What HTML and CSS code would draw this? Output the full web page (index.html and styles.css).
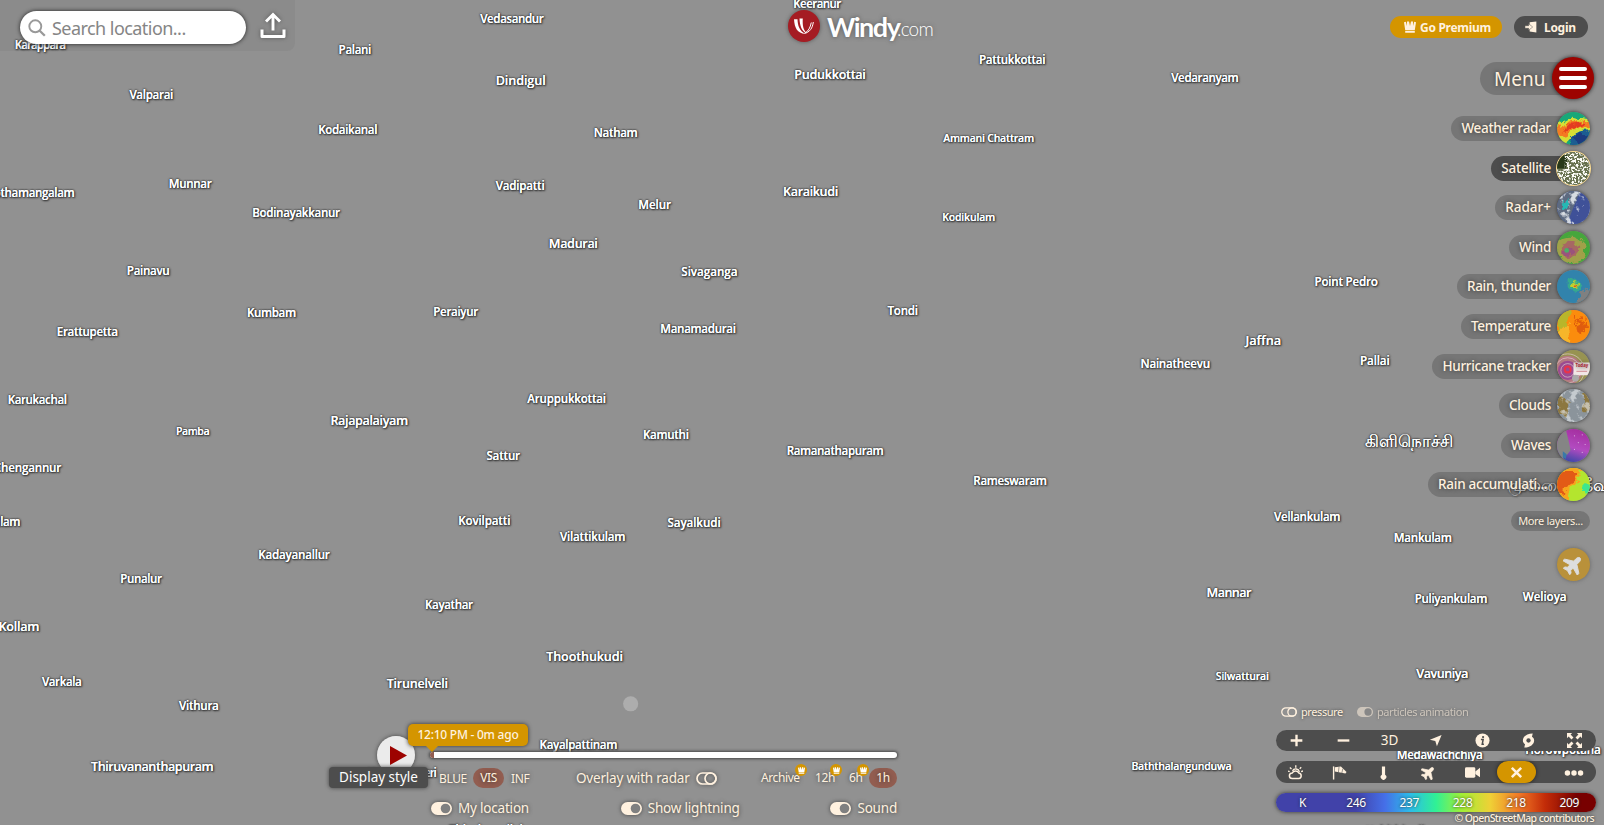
FILE: index.html
```html
<!DOCTYPE html>
<html lang="en">
<head>
<meta charset="utf-8">
<title>Windy.com</title>
<link rel="stylesheet" href="styles.css">
</head>
<body>
<svg class="defs" width="0" height="0">
  <defs>
    <symbol id="toggle-off" viewBox="0 0 21 13"><rect x="1" y="1" width="19" height="11" rx="5.5" fill="none" stroke="currentColor" stroke-width="1.7"/><circle cx="14.5" cy="6.5" r="5.5" fill="none" stroke="currentColor" stroke-width="1.7"/></symbol>
    <symbol id="toggle-on" viewBox="0 0 21 13"><rect x="0" y="0" width="21" height="13" rx="6.5" fill="currentColor"/><circle cx="14.5" cy="6.5" r="4.8" fill="#808080"/></symbol>
    <symbol id="crown" viewBox="0 0 12 12"><path d="M0 1.300 1.800.7 3 5 3 .6H5L6 5 7 .6H9L9 5 10.200.7 12 1.300 10.800 9H1.200zM1.200 9.700h9.600v2H1.200z" fill="currentColor"/></symbol>
    <symbol id="plane" viewBox="0 0 512 512"><path transform="rotate(-45 256 256)" fill="currentColor" stroke="currentColor" stroke-width="22" stroke-linejoin="round" d="M482 256c0-32-40-56-74-56h-92L202 20c-4-7-12-12-20-12h-44l52 192H104l-42-54H14l32 110-32 110h48l42-54h86l-52 192h44c8 0 16-5 20-12l114-180h92c34 0 74-24 74-56z"/></symbol>
    <filter id="rough" x="-20%" y="-20%" width="140%" height="140%"><feTurbulence type="fractalNoise" baseFrequency=".16" numOctaves="3" seed="4"/><feDisplacementMap in="SourceGraphic" scale="9" xChannelSelector="R" yChannelSelector="G"/><feGaussianBlur stdDeviation=".5"/></filter>
    <filter id="speckle"><feTurbulence type="fractalNoise" baseFrequency=".45" numOctaves="3" seed="8"/><feColorMatrix values="0 0 0 0 1  0 0 0 0 1  0 0 0 0 .96  7 0 0 0 -3.2"/><feComposite in2="SourceGraphic" operator="in"/></filter>
    <filter id="cloudy"><feTurbulence type="fractalNoise" baseFrequency=".14" numOctaves="4" seed="12"/><feColorMatrix values="0 0 0 0 .78  0 0 0 0 .81  0 0 0 0 .84  5 0 0 0 -2.5"/><feComposite in2="SourceGraphic" operator="in"/></filter>
    <linearGradient id="waves-fill" x1=".6" y1="0" x2=".3" y2="1"><stop offset="0" stop-color="#a52fa0"/><stop offset=".55" stop-color="#b24bc0"/><stop offset="1" stop-color="#3546a6"/></linearGradient>
  </defs>
</svg>

<main class="app">
  <svg class="map" viewBox="0 0 1568 806.5" width="1604" height="825">
    <circle cx="616.5" cy="688" r="7.4" fill="#adadad"/>
    <g class="labels">
      <text x="799" y="7.500" textLength="47">Keeranur</text>
      <text x="500.500" y="22.500" textLength="62">Vedasandur</text>
      <text x="39.500" y="48" textLength="50">Karappara</text>
      <text x="347" y="52.500" textLength="32">Palani</text>
      <text x="148" y="96.500" textLength="43">Valparai</text>
      <text class="big" x="509" y="83" textLength="49">Dindigul</text>
      <text class="big" x="811.500" y="77" textLength="70">Pudukkottai</text>
      <text x="989.500" y="62.500" textLength="65">Pattukkottai</text>
      <text x="1178" y="80" textLength="66">Vedaranyam</text>
      <text x="340" y="131" textLength="58">Kodaikanal</text>
      <text x="602" y="133.500" textLength="43">Natham</text>
      <text class="small" x="966.500" y="138.500" textLength="89">Ammani Chattram</text>
      <text x="186" y="183.500" textLength="42">Munnar</text>
      <text x="508.500" y="185.500" textLength="48">Vadipatti</text>
      <text x="640" y="204" textLength="32">Melur</text>
      <text class="big" x="792.500" y="191.500" textLength="54">Karaikudi</text>
      <text x="30" y="192.500" textLength="86">Kothamangalam</text>
      <text x="289.500" y="212" textLength="86">Bodinayakkanur</text>
      <text class="small" x="947" y="216" textLength="52">Kodikulam</text>
      <text class="big" x="560.500" y="242" textLength="48">Madurai</text>
      <text x="145" y="268.500" textLength="42">Painavu</text>
      <text x="693.500" y="269.500" textLength="55">Sivaganga</text>
      <text x="265.500" y="309.500" textLength="48">Kumbam</text>
      <text x="445.500" y="308.500" textLength="44">Peraiyur</text>
      <text x="85.500" y="328" textLength="60">Erattupetta</text>
      <text x="682.500" y="325.500" textLength="74">Manamadurai</text>
      <text x="882.500" y="307.500" textLength="30">Tondi</text>
      <text x="1316" y="279.500" textLength="62">Point Pedro</text>
      <text class="big" x="1235" y="337" textLength="35">Jaffna</text>
      <text x="1149" y="359.500" textLength="68">Nainatheevu</text>
      <text x="1344" y="356.500" textLength="29">Pallai</text>
      <text x="36.500" y="394.500" textLength="58">Karukachal</text>
      <text x="554" y="393.500" textLength="77">Aruppukkottai</text>
      <text class="big" x="361" y="415" textLength="76">Rajapalaiyam</text>
      <text class="small" x="188.500" y="425" textLength="33">Pamba</text>
      <text x="651" y="429" textLength="45">Kamuthi</text>
      <text x="492" y="449.500" textLength="33">Sattur</text>
      <text x="816.500" y="444.500" textLength="95">Ramanathapuram</text>
      <text x="27" y="461" textLength="66">Chengannur</text>
      <text x="987.500" y="474" textLength="72">Rameswaram</text>
      <text class="tamil" x="1377" y="437">கிளிநொச்சி</text>
      <text class="tamil" x="1524" y="480">முல்லைத்தீவு</text>
      <text x="1278" y="509" textLength="65">Vellankulam</text>
      <text x="1391" y="529.500" textLength="57">Mankulam</text>
      <text x="473.500" y="513" textLength="51">Kovilpatti</text>
      <text x="678.500" y="515" textLength="52">Sayalkudi</text>
      <text x="579.500" y="528.500" textLength="64">Vilattikulam</text>
      <text x="2" y="514" textLength="36">Kollam</text>
      <text x="287.500" y="546" textLength="70">Kadayanallur</text>
      <text x="138" y="569.500" textLength="41">Punalur</text>
      <text x="439" y="595" textLength="47">Kayathar</text>
      <text class="big" x="1201.500" y="584" textLength="44">Mannar</text>
      <text x="1418.500" y="589" textLength="71">Puliyankulam</text>
      <text x="1510" y="588" textLength="43">Welioya</text>
      <text class="big" x="18.500" y="617" textLength="40">Kollam</text>
      <text class="big" x="571.500" y="646.500" textLength="75">Thoothukudi</text>
      <text x="60.500" y="671" textLength="39">Varkala</text>
      <text class="big" x="408" y="672.500" textLength="60">Tirunelveli</text>
      <text x="194.500" y="694.500" textLength="39">Vithura</text>
      <text class="small" x="1214.500" y="665" textLength="52">Silwatturai</text>
      <text class="big" x="1410" y="663" textLength="51">Vavuniya</text>
      <text class="big" x="149" y="753.500" textLength="120">Thiruvananthapuram</text>
      <text x="565.500" y="732.500" textLength="76">Kayalpattinam</text>
      <text x="393" y="759.500" textLength="68">Kanniyakumeri</text>
      <text class="small" x="1155" y="753" textLength="98">Baththalangunduwa</text>
      <text x="1407.500" y="741.500" textLength="84">Medawachchiya</text>
      <text x="1528" y="737.500" textLength="74">Horowpotana</text>
      <text x="475" y="815.500" textLength="72">Thisaiyanvilai</text>
      <text x="1375" y="816" textLength="80">Kebithigollewa</text>
    </g>
  </svg>

  <header class="search-bar">
    <div class="search">
      <svg class="search-icon" viewBox="0 0 18 18"><circle cx="7.300" cy="7.300" r="6" fill="none" stroke="#999" stroke-width="1.900"/><path d="m11.500 11.500 5.300 5.300" stroke="#999" stroke-width="2.300"/></svg>
      <span>Search location...</span>
    </div>
    <svg class="upload" viewBox="0 0 26 27"><path d="M13 18.500V3M6 9.500 13 2.500l7 7" fill="none" stroke="#fff" stroke-width="2.900"/><path d="M2 17.500V24.500H24V17.500" fill="none" stroke="#fff" stroke-width="3" stroke-linejoin="round"/></svg>
  </header>

  <div class="logo">
    <svg class="logo-mark" viewBox="0 0 32 32"><circle cx="16" cy="16" r="16" fill="#a51c23"/><path d="M6 9.300h3.500c.2 6.500 2 11.500 7.500 14.500C9.500 23.600 6.500 18 6 9.300zM11.500 8.500h3.300c-.4 6.500.3 11.500 4.200 15-5.300-2-7.300-8-7.500-15z" fill="#fff"/><path d="M25.300 12c-.7 6-3.500 10.300-9 11.400M23.300 12.500c-1 5-2.800 8.500-6.300 10.500" fill="none" stroke="#fff" stroke-width="1"/></svg>
    <span class="logo-name">Windy</span><span class="logo-tld">.com</span>
  </div>

  <nav class="account">
    <a class="premium"><svg viewBox="0 0 12 12"><use href="#crown"/></svg><span>Go Premium</span></a>
    <a class="login"><svg viewBox="0 0 13 12"><path d="M5 .8 12.300 0v12L5 10.800V8.500L6.800 6 5 3.500z" fill="currentColor"/><path d="M0 4.600h4V2.400L8.300 6 4 9.600V7.400H0z" fill="currentColor" stroke="#4d4d4d" stroke-width=".5"/></svg><span>Login</span></a>
  </nav>

  <aside class="layers">
    <div class="menu"><span>Menu</span><i><b></b><b></b><b></b></i></div>
    <ul>
      <li><span>Weather radar</span><svg class="thumb" viewBox="0 0 34 34"><rect width="34" height="34" fill="#18a878"/><g filter="url(#rough)"><path d="M16 21 38 16V38H14z" fill="#1a5b91"/><path d="M18 26 26 20l6 6-8 8z" fill="#1c3a80"/><path d="M-2 15 14 6 38 9v8L22 19 14 28 2 36-2 30z" fill="#d7df36"/><path d="M-2 18 15 9 36 11v4l-17 2L9 25-2 27z" fill="#f47a20"/><path d="m10 12 16-1v3l-12 3-8 5z" fill="#e33a20"/></g></svg></li>
      <li class="active"><span>Satellite</span><svg class="thumb" viewBox="0 0 34 34"><rect width="34" height="34" fill="#66704d"/><path d="M0 3h11l-2 14H0z" fill="#283818"/><rect x="8" width="26" height="34" fill="#fff" filter="url(#speckle)"/><rect y="18" width="10" height="16" fill="#fff" filter="url(#speckle)"/></svg></li>
      <li><span class="w-radar-plus">Radar+</span><svg class="thumb" viewBox="0 0 34 34"><rect width="34" height="34" fill="#3f5198"/><path d="M0 34V0h24L10 34z" fill="#5d6a80"/><rect width="34" height="34" fill="#fff" filter="url(#cloudy)" opacity=".9"/><path d="M30 8h10v30H14z" fill="#3f5198" filter="url(#rough)"/><path d="m4 14 8-7-1 8-6 5z" fill="#26b8b4" filter="url(#rough)"/></svg></li>
      <li><span>Wind</span><svg class="thumb" viewBox="0 0 34 34"><rect width="34" height="34" fill="#46a63c"/><g filter="url(#rough)"><ellipse cx="14" cy="20" rx="16" ry="14" fill="#a1a04a"/><circle cx="13" cy="19" r="9" fill="#a76763"/><circle cx="12" cy="21" r="5" fill="#9a527c"/></g><circle cx="10" cy="20" r="2.500" fill="#4cae67"/></svg></li>
      <li><span>Rain, thunder</span><svg class="thumb" viewBox="0 0 34 34"><rect width="34" height="34" fill="#3183ac"/><g filter="url(#rough)"><path d="M40 15 25 22 18 38H40z" fill="#808080"/><path d="m11 8 12 3 3 9-7 4-8-5z" fill="#35a98e"/><circle cx="18" cy="15" r="3.500" fill="#c5d22b"/><circle cx="19" cy="16" r="1.700" fill="#dd5927"/></g></svg></li>
      <li><span>Temperature</span><svg class="thumb" viewBox="0 0 34 34"><rect width="34" height="34" fill="#fb8c0d"/><g filter="url(#rough)"><path d="M0 0h14L9 16 0 24z" fill="#b8b62a"/><path d="M0 24 12 12l2 26H0z" fill="#f6b62a"/><path d="m17 5 2 0 2 12 3-10 3 9 2-9 2 12-6 6-5-2z" fill="#df5b0c"/></g></svg></li>
      <li><span>Hurricane tracker</span><svg class="thumb" viewBox="0 0 34 34"><rect width="34" height="34" fill="#979351"/><circle cx="11" cy="21" r="15" fill="#b57a82"/><circle cx="11" cy="21" r="10" fill="#9b4b91"/><g fill="none" stroke="#e3ccd0" stroke-width=".7"><circle cx="11" cy="21" r="7"/><circle cx="11" cy="21" r="13"/><circle cx="11" cy="21" r="17"/></g><circle cx="11" cy="20" r="3" fill="none" stroke="#e8344b" stroke-width="2.200"/><path d="M17 13h17v13H17z" fill="#f1e7e5"/><text x="19" y="18" font-size="4.500" font-weight="700" fill="#aa2430">Today</text><path d="M20 22h11" stroke="#d28a92"/><circle cx="19" cy="29" r="3.500" fill="#aaa"/></svg></li>
      <li><span>Clouds</span><svg class="thumb" viewBox="0 0 34 34"><rect width="34" height="34" fill="#8b949b"/><path d="M0 4 12 12 10 28H0zM26 5h12v18h-10z" fill="#8c7740" filter="url(#rough)"/><rect width="34" height="34" fill="#fff" filter="url(#cloudy)" opacity=".65"/></svg></li>
      <li><span>Waves</span><svg class="thumb" viewBox="0 0 34 34"><rect width="34" height="34" fill="url(#waves-fill)"/><path d="M0 0h9l3 12 2 10-4 5-4-2 1 9H0z" fill="#858585"/><path d="m6 23 4 3-1 5-3-2z" fill="#3979a8"/><g fill="#dab4e0"><circle cx="18" cy="7" r=".6"/><circle cx="26" cy="6" r=".6"/><circle cx="22" cy="14" r=".6"/><circle cx="29" cy="16" r=".6"/><circle cx="18" cy="21" r=".6"/><circle cx="26" cy="24" r=".6"/></g></svg></li>
      <li><span class="w-accumulation">Rain accumulati...</span><svg class="thumb" viewBox="0 0 34 34"><rect width="34" height="34" fill="#b4e52e"/><g filter="url(#rough)"><path d="M28 16h12v12l-10 3z" fill="#3ce68f"/><path d="M-2-2H26l-4 16-9 8-1 16H-2z" fill="#f7a51f"/><path d="M-2 4 22 4 18 14 8 20 7 30-2 28z" fill="#e25a19"/></g></svg></li>
    </ul>
    <span class="more">More layers...</span>
    <span class="plane"><svg viewBox="0 0 512 512"><use href="#plane"/></svg></span>
  </aside>

  <section class="player">
    <div class="track"><i></i></div>
    <div class="row">
      <span class="opt o-blue">BLUE</span><span class="opt chosen o-vis">VIS</span><span class="opt o-inf">INF</span>
      <span class="radar-overlay">Overlay with radar <svg class="toggle"><use href="#toggle-off"/></svg></span>
      <span class="range">
        <span class="archive">Archive<i class="badge"><svg viewBox="0 0 12 12"><use href="#crown"/></svg></i></span>
        <span class="h12">12h<i class="badge"><svg viewBox="0 0 12 12"><use href="#crown"/></svg></i></span>
        <span class="h6">6h<i class="badge"><svg viewBox="0 0 12 12"><use href="#crown"/></svg></i></span>
        <span class="chosen h1">1h</span>
      </span>
    </div>
    <div class="row switches">
      <span class="s-location"><svg class="toggle"><use href="#toggle-on"/></svg>My location</span>
      <span class="s-lightning"><svg class="toggle"><use href="#toggle-on"/></svg>Show lightning</span>
      <span class="s-sound"><svg class="toggle"><use href="#toggle-on"/></svg>Sound</span>
    </div>
  </section>
  <div class="play"><svg viewBox="0 0 38 38"><circle cx="19" cy="19" r="19" fill="#ebebeb"/><path d="M13 10v19l17-9.500z" fill="#9d0300"/></svg></div>
  <div class="timecode">12:10 PM - 0m ago</div>
  <div class="tip">Display style</div>

  <section class="controls">
    <div class="flags">
      <span class="f-pressure"><svg><use href="#toggle-off"/></svg>pressure</span>
      <span class="f-particles"><svg><use href="#toggle-on"/></svg>particles animation</span>
    </div>
    <div class="bar top">
      <span><svg viewBox="0 0 16 16"><path d="M8 2.500v11M2.500 8h11" stroke="currentColor" stroke-width="2.200"/></svg></span>
      <span><svg viewBox="0 0 16 16"><path d="M2.500 8h11" stroke="currentColor" stroke-width="2.200"/></svg></span>
      <span class="three-d">3D</span>
      <span><svg viewBox="0 0 16 16"><path d="M14.500 2 9.500 14 7.800 8.500 2 7.200z" fill="currentColor"/></svg></span>
      <span><svg viewBox="0 0 16 16"><circle cx="8" cy="8" r="7.500" fill="currentColor"/><path d="M6.300 6.800H8.700L7.700 12H9.500" fill="none" stroke="#4d4d4d" stroke-width="1.600"/><circle cx="8.600" cy="4.300" r="1.200" fill="#4d4d4d"/></svg></span>
      <span><svg viewBox="0 0 16 16"><path d="M12.500.5C6 .5 2 4 2 8c0 1.700.8 3 2.300 3.900L3.500 15.500C10 15.500 14 12 14 8c0-1.700-.8-3-2.300-3.900z" fill="currentColor"/><circle cx="8" cy="8" r="2.300" fill="#4d4d4d"/></svg></span>
      <span><svg viewBox="0 0 16 16"><path d="M0 0h5.500L3.800 1.700 6.900 4.800 4.800 6.900 1.700 3.800 0 5.500zM16 0v5.500l-1.700-1.700-3.100 3.100-2.100-2.100 3.100-3.100L10.500 0zM0 16v-5.500l1.700 1.700 3.100-3.100 2.100 2.100-3.100 3.100L5.500 16zM16 16h-5.500l1.700-1.700-3.100-3.100 2.100-2.100 3.100 3.100 1.700-1.700z" fill="currentColor"/></svg></span>
    </div>
    <div class="bar bottom">
      <span><svg viewBox="0 0 16 16"><path d="M4.500 14.500h7a3 3 0 0 0 .2-5.900A4 4 0 0 0 4.500 8.500a3 3 0 0 0 0 6z" fill="none" stroke="currentColor" stroke-width="1.600"/><path d="M4.800 6.300a4 4 0 0 1 7.400 1M8.300 2.800V.3M3.700 4.200 2 2.600M12.500 4l1.600-1.600M1.800 7 0 6.400M14 7l2-.6" fill="none" stroke="currentColor" stroke-width="1.400"/></svg></span>
      <span><svg viewBox="0 0 16 16"><path d="M1.700 1.500v14" stroke="currentColor" stroke-width="1.500"/><path d="M3 2.500 9.500 1.500 15.500 7.500 14.300 9 3 7z" fill="currentColor"/><path d="m7.500 2-.7 6M11.500 4l-1 4.500" stroke="#4d4d4d" stroke-width=".6"/></svg></span>
      <span><svg viewBox="0 0 16 16"><path d="M6.300 1.500h3.400v8.800a3 3 0 1 1-3.400 0z" fill="currentColor"/></svg></span>
      <span><svg viewBox="0 0 512 512"><use href="#plane"/></svg></span>
      <span><svg viewBox="0 0 16 16"><rect x="0" y="2.500" width="11" height="11" rx="1.500" fill="currentColor"/><path d="m11 7 5-4v10l-5-3.500z" fill="currentColor"/></svg></span>
      <span class="close"><svg viewBox="0 0 16 16"><path d="m3 3 10 10m0-10-10 10" stroke="currentColor" stroke-width="2.700"/></svg></span>
      <span class="dots"><svg viewBox="0 0 20 16"><circle cx="3" cy="8.500" r="2.900" fill="currentColor"/><circle cx="10" cy="8.500" r="2.900" fill="currentColor"/><circle cx="17" cy="8.500" r="2.900" fill="currentColor"/></svg></span>
    </div>
    <div class="scale"><span>K</span><span>246</span><span>237</span><span>228</span><span>218</span><span>209</span></div>
    <div class="credit">© OpenStreetMap contributors</div>
  </section>
</main>
</body>
</html>
```
FILE: styles.css
```css
* { box-sizing: border-box; }
body { margin: 0; background: #919191; font-family: "Noto Sans", "Open Sans", sans-serif; color: #fff1df; }
i { font-style: normal; }
svg { display: block; }
.defs { position: absolute; }
.app { position: relative; width: 1604px; height: 825px; overflow: hidden; }
.map { position: absolute; inset: 0; }
.labels text {
  font-family: "Open Sans", "Noto Sans", sans-serif;
  font-size: 11.5px; font-weight: 600; fill: #fff; text-anchor: middle;
  text-shadow: 0 0 .6px #fff, 0 0 2px #222, 0 0 2px #333, 1px 1px 2px #333;
}
.labels .big { font-size: 12.5px; }
.labels .small { font-size: 10.5px; }
.labels .tamil { font-size: 16.2px; font-weight: 400; }

.search-bar { position: absolute; left: 0; top: 0; width: 295px; height: 51px; padding: 11px 0 0 20px; display: flex; gap: 14px; background: rgba(0, 0, 0, .04); border-radius: 0 0 8px 0; }
.search { width: 226px; height: 33px; padding: 0 8px; display: flex; align-items: center; gap: 6px; border-radius: 17px; background: #fff; box-shadow: 0 0 4px #222; color: #858585; font-size: 18px; letter-spacing: -.55px; white-space: nowrap; }
.search-icon { width: 18px; height: 18px; }
.upload { width: 26px; height: 27px; margin-top: 1px; filter: drop-shadow(0 0 2px #555); }

.logo { position: absolute; left: 788px; top: 10px; display: flex; align-items: center; height: 32px; color: #fff; font-family: Lato, sans-serif; text-shadow: 0 0 4px #555; }
.logo-mark { width: 32px; height: 32px; margin-right: 7px; filter: drop-shadow(0 0 2px #555); }
.logo-name { width: 70px; font-size: 27px; font-weight: 700; letter-spacing: -1.5px; }
.logo-tld { font-size: 19px; font-weight: 300; padding-top: 5px; letter-spacing: -.8px; }

.account { position: absolute; right: 16px; top: 16px; display: flex; gap: 12px; font-size: 12px; font-weight: 700; }
.account a { display: flex; align-items: center; height: 22px; border-radius: 11px; letter-spacing: -.3px; white-space: nowrap; }
.premium { width: 112px; padding-left: 14px; gap: 4px; background: #d49500; }
.login { width: 74px; padding-left: 11px; gap: 7px; background: #4d4d4d; }
.account svg { width: 12px; height: 12px; flex: none; }

.layers { position: absolute; right: 0; top: 57px; width: 200px; display: flex; flex-direction: column; align-items: flex-end; text-shadow: 0 0 4px #333; }
.menu { display: flex; align-items: center; margin-right: 10px; height: 42px; }
.menu span { width: 92px; height: 33px; margin-right: -20px; padding-left: 14px; line-height: 34px; border-radius: 17px 0 0 17px; background: rgba(68, 68, 68, .34); font-size: 19px; }
.menu i { position: relative; width: 42px; height: 42px; padding: 10px 7px; display: flex; flex-direction: column; gap: 5px; border-radius: 50%; background: #9d0300; box-shadow: 0 0 4px #222; }
.menu b { height: 4px; border-radius: 2px; background: #fff; }
.layers ul { list-style: none; margin: 12.5px 14px 0 0; padding: 0; display: flex; flex-direction: column; align-items: flex-end; gap: 5.6px; }
.layers li { display: flex; align-items: center; height: 34px; }
.layers li span { height: 25px; line-height: 25px; margin-right: -17px; padding: 0 23px 0 10px; border-radius: 13px 0 0 13px; background: rgba(68, 68, 68, .34); font-size: 13.5px; font-weight: 500; letter-spacing: -.3px; white-space: nowrap; }
.layers .active span { background: #4d4d4d; letter-spacing: -.25px; }
.layers li .w-radar-plus { letter-spacing: 0; }
.layers li .w-accumulation { width: 146px; letter-spacing: -.25px; }
.thumb { position: relative; width: 33px; height: 33px; border-radius: 50%; box-shadow: 0 0 4px #333; }
.active .thumb { box-shadow: 0 0 0 1px #ffdf94, 0 0 4px #333; }
.more { margin: 9.5px 14px 0 0; width: 79px; height: 20px; line-height: 20px; border-radius: 10px; background: rgba(68, 68, 68, .34); text-align: center; font-size: 11px; letter-spacing: -.35px; }
.plane { margin: 17px 14px 0 0; width: 33px; height: 33px; display: grid; place-items: center; border-radius: 50%; background: #b9913a; color: #ddd; box-shadow: 0 0 4px #666; }
.plane svg { width: 21px; height: 21px; }

.player { position: absolute; left: 430px; top: 752px; width: 467px; text-shadow: 0 0 4px #333; }
.track { height: 6px; border-radius: 3px; background: #fff; box-shadow: 0 0 3px 1px #444; overflow: hidden; }
.track i { display: block; width: 4px; height: 6px; background: #925d50; }
.row { display: flex; align-items: center; height: 20px; margin-top: 10px; font-size: 13.5px; letter-spacing: -.2px; white-space: nowrap; }
.opt, .range { font-size: 12px; letter-spacing: -.4px; }
.o-blue { width: 43px; padding-left: 9px; }
.chosen { height: 20px; line-height: 20px; border-radius: 10px; background: #925d50; text-align: center; }
.o-vis { width: 31px; }
.o-inf { width: 72px; padding-left: 7px; }
.radar-overlay { display: flex; gap: 6px; align-items: center; width: 139px; justify-content: space-between; }
.toggle { width: 21px; height: 13px; flex: none; filter: drop-shadow(0 0 2px #444); }
.range { display: flex; margin-left: auto; }
.range > span { position: relative; line-height: 20px; }
.archive { width: 54px; }
.h12 { width: 34px; }
.h6 { width: 20px; }
.h1 { width: 28px; }
.badge { position: absolute; top: -4px; width: 12px; height: 12px; display: grid; place-items: center; border-radius: 50%; background: #d49500; color: #fff; }
.badge svg { width: 7px; height: 7px; }
.range .archive .badge { left: 34px; }
.range .h12 .badge { left: 15px; }
.range .h6 .badge { left: 8px; }
.switches { padding-left: 1px; }
.switches span { display: flex; align-items: center; gap: 6px; }
.s-location { width: 190px; }
.s-lightning { width: 210px; }
.play { position: absolute; left: 377px; top: 736px; width: 38px; height: 38px; border-radius: 50%; box-shadow: 0 0 4px #444; }
.timecode { position: absolute; left: 408px; top: 724px; width: 120px; height: 22px; line-height: 22px; border-radius: 5px; background: #d49500; box-shadow: 0 0 4px #333; text-align: center; font-size: 12px; font-weight: 500; letter-spacing: -.25px; }
.timecode::after { content: ""; position: absolute; left: 18px; top: 22px; border: 6px solid transparent; border-top-color: #d49500; border-bottom: 0; }
.tip { position: absolute; left: 329px; top: 767px; width: 99px; height: 21px; line-height: 21px; border-radius: 4px; background: #4d4d4d; box-shadow: 0 0 4px #444; color: #fff; text-align: center; font-size: 13.5px; }

.controls { position: absolute; left: 1276px; top: 703px; width: 320px; }
.flags { display: flex; height: 17px; padding-left: 5px; font-size: 11px; letter-spacing: -.42px; text-shadow: 0 0 3px #333; white-space: nowrap; }
.flags span { display: flex; align-items: center; gap: 4px; }
.flags svg { width: 16px; height: 10px; flex: none; }
.f-pressure { width: 76px; }
.f-particles { opacity: .55; }
.bar { display: flex; background: #4d4d4d; }
.bar span { flex: 1; display: grid; place-items: center; }
.bar svg { width: 15px; height: 15px; }
.top { height: 21px; margin-top: 10px; border-radius: 11px; }
.bar.top span { flex: 0 0 46.3px; }
.bar.top span:first-child { margin-left: -2.2px; }
.top span:first-child svg, .top span:nth-child(2) svg { width: 17px; height: 17px; }
.bar .three-d { font-size: 13.5px; line-height: 21px; }
.bottom { height: 22px; margin-top: 10px; border-radius: 11px; }
.bar.bottom span { flex: 0 0 44.2px; }
.bar.bottom span:first-child { margin-left: -2.6px; }
.bar.bottom .close { flex: 0 0 39px; margin-left: 2.6px; border-radius: 11px; background: #d49500; box-shadow: 0 0 4px #222; }
.bar.bottom .dots { flex: 1; padding-left: 16px; }
.dots svg { width: 20px; }
.scale { display: flex; height: 19px; margin-top: 10px; border-radius: 10px; box-shadow: 0 0 4px #333; background: linear-gradient(90deg, #4142a9 0 25%, #456fe8 34%, #2cbde8 42%, #30f195 50%, #a1ef35 58%, #efd036 67%, #f17726 76%, #c32c08 84%, #780000 94%); color: #fff; }
.scale span { flex: 1; text-align: center; line-height: 20px; font-size: 12px; letter-spacing: -.3px; text-shadow: 0 0 3px #222; }
.credit { margin: 0 2px 0 0; height: 13px; line-height: 12px; text-align: right; font-size: 10.500px; font-weight: 500; letter-spacing: -.6px; text-shadow: 0 0 3px #222; white-space: nowrap; }
```
